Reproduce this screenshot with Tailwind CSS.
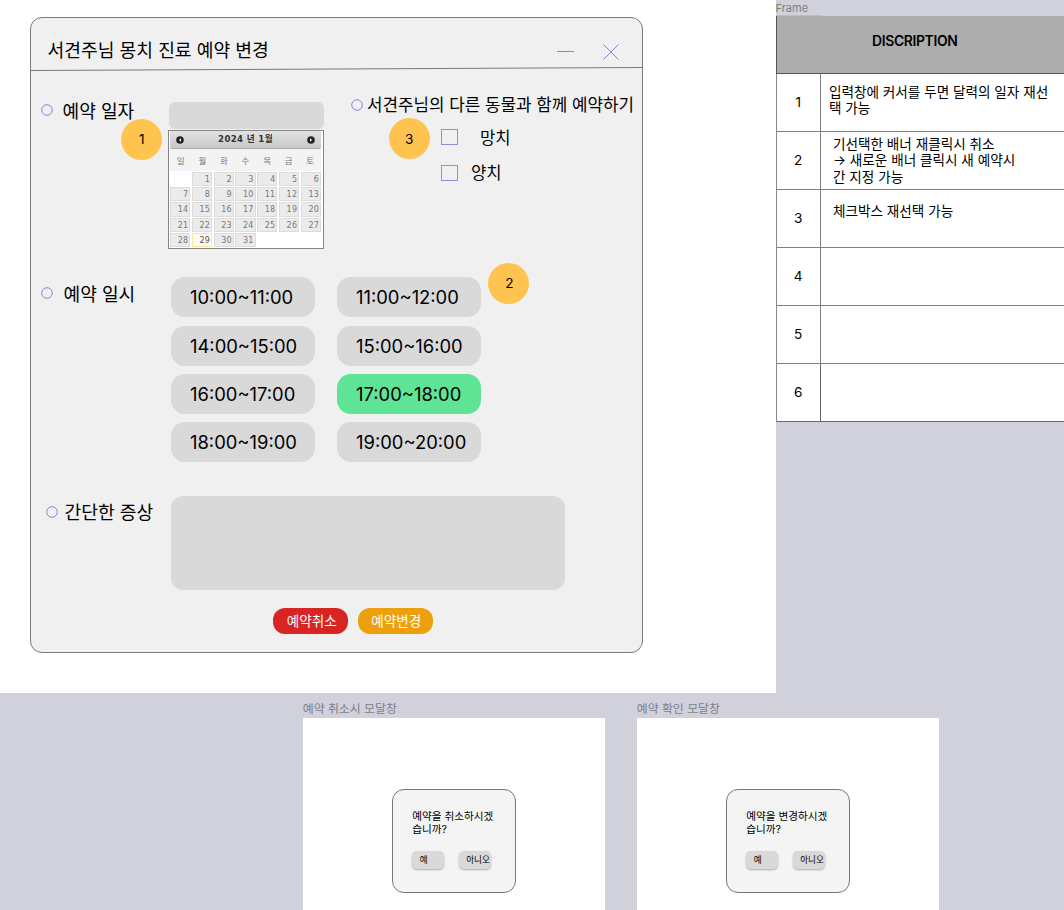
<!DOCTYPE html>
<html lang="ko">
<head>
  <meta charset="UTF-8" />
  <meta name="viewport" content="width=device-width, initial-scale=1" />
  <title>진료 예약 변경</title>
  <script src="https://cdn.jsdelivr.net/npm/@tailwindcss/browser@4"></script>
</head>
<body class="w-[1064px] h-[910px] overflow-hidden bg-[#d1d1dc] text-black font-['Inter','Noto_Sans_CJK_KR',sans-serif]">

<div class="flex h-[693px]">
  <!-- Main screen -->
  <main class="relative w-[775.5px] shrink-0 bg-white pl-[30px] pt-[17px]">
    <section class="w-[613px] h-[636px] rounded-[12px] border border-[#7a7a7a] bg-[#f0f0f0]">
      <header class="h-[50px] flex items-center pl-[16.5px] pr-[23px]">
        <h1 class="flex-1 text-[18.2px] leading-6 pt-[14px]">서견주님 몽치 진료 예약 변경</h1>
        <svg class="w-[18px] h-4 mt-[18px]" viewBox="0 0 18 16" stroke="#8585e0" fill="none"><path d="M0 7.5h17" /></svg>
        <svg class="w-4 h-4 ml-[28px] mt-[18px]" viewBox="0 0 16 16" stroke="#8585e0" fill="none"><path d="M.5 .5l15 15M15.5 .5l-15 15" /></svg>
      </header>
      <svg class="block w-[611px] h-[4px] overflow-visible" viewBox="0 0 611 4" stroke="#777" fill="none"><path d="M0 2.5L611 -0.5" /></svg>

      <!-- Date + companion animals -->
      <div class="flex h-[187px]">
        <div class="flex items-start w-[137px] pl-[9.5px] pt-[27px]">
          <svg class="w-3 h-3 mt-[5px]" viewBox="0 0 12 12" fill="none" stroke="#8585e0"><circle cx="6" cy="6" r="5.3" /></svg>
          <span class="ml-[10px] text-[18.1px] leading-6 whitespace-nowrap">예약 일자</span>
        </div>
        <div class="w-[156px] pt-[30px]">
          <div class="w-[155px] h-[27px] ml-px rounded-[6px] bg-[#d9d9d9]"></div>
          <div class="w-[156px] h-[119px] mt-px border border-[#858585] bg-white pl-px pr-[2px] text-[#777] font-['DejaVu_Sans','Noto_Sans_CJK_KR',sans-serif]">
            <div class="flex items-center justify-between h-[18px] px-[6px] rounded-b-[2px] border-b border-[#aaa] bg-linear-to-b from-[#e2e2e2] to-[#c8c8c8]">
              <svg class="w-2 h-2" viewBox="0 0 8 8"><circle cx="4" cy="4" r="3.8" fill="#222" /><path d="M5 2.2L3 4l2 1.8z" fill="#fff" /></svg>
              <span class="text-[8.6px] tracking-[0.35px] font-bold text-[#333] leading-none whitespace-nowrap">2024 년 1월</span>
              <svg class="w-2 h-2" viewBox="0 0 8 8"><circle cx="4" cy="4" r="3.8" fill="#222" /><path d="M3 2.2L5 4 3 5.8z" fill="#fff" /></svg>
            </div>
            <div class="grid grid-cols-7 h-[22px] bg-[#f3f3f3] text-[8.5px] leading-[24px] text-center">
              <span>일</span><span>월</span><span>화</span><span>수</span><span>목</span><span>금</span><span>토</span>
            </div>
            <div id="days" class="grid grid-cols-7 auto-rows-[14.2px] gap-x-[1.5px] gap-y-[1px] pt-[1px] text-[8px] leading-[13px] tracking-[0.2px] text-right"></div>
          </div>
        </div>
        <div class="pl-[27px] pt-[20px]">
          <div class="flex items-center h-[26px]">
            <svg class="w-3 h-3" viewBox="0 0 12 12" fill="none" stroke="#8585e0"><circle cx="6" cy="6" r="5.3" /></svg>
            <span class="ml-[4px] pt-[2px] text-[16.85px] whitespace-nowrap">서견주님의 다른 동물과 함께 예약하기</span>
          </div>
          <label class="flex items-center h-[36px] pl-[90px] mt-px">
            <span class="w-[17px] h-[16px] border border-[#8f8fe2]"></span>
            <span class="ml-[22px] pt-[2px] text-[16.6px]">망치</span>
          </label>
          <label class="flex items-center h-[36px] pl-[90px]">
            <span class="w-[17px] h-[16px] border border-[#8f8fe2]"></span>
            <span class="ml-[13px] text-[16.6px]">양치</span>
          </label>
        </div>
      </div>

      <!-- Time slots -->
      <div class="flex h-[219px] pt-[18px]">
        <div class="flex items-start w-[140px] pl-[10px] pt-[5px]">
          <svg class="w-3 h-3 mt-[5px]" viewBox="0 0 12 12" fill="none" stroke="#8585e0"><circle cx="6" cy="6" r="5.3" /></svg>
          <span class="ml-[10.5px] text-[18.1px] leading-6 whitespace-nowrap">예약 일시</span>
        </div>
        <div class="grid grid-cols-[144px_144px] auto-rows-[40px] gap-x-[22px] gap-y-[8.2px] pt-[0.4px] text-[18.4px] leading-[41px]">
          <div class="pl-[19px] rounded-[14px] bg-[#d9d9d9]">10:00~11:00</div>
          <div class="pl-[19px] rounded-[14px] bg-[#d9d9d9]">11:00~12:00</div>
          <div class="pl-[19px] rounded-[14px] bg-[#d9d9d9]">14:00~15:00</div>
          <div class="pl-[19px] rounded-[14px] bg-[#d9d9d9]">15:00~16:00</div>
          <div class="pl-[19px] rounded-[14px] bg-[#d9d9d9]">16:00~17:00</div>
          <div class="pl-[19px] rounded-[14px] bg-[#5fe395]">17:00~18:00</div>
          <div class="pl-[19px] rounded-[14px] bg-[#d9d9d9]">18:00~19:00</div>
          <div class="pl-[19px] rounded-[14px] bg-[#d9d9d9]">19:00~20:00</div>
        </div>
      </div>

      <!-- Symptoms -->
      <div class="flex pt-[18px]">
        <div class="flex items-start w-[140px] pl-[15px] pt-[4px]">
          <svg class="w-3 h-3 mt-[6px]" viewBox="0 0 12 12" fill="none" stroke="#8585e0"><circle cx="6" cy="6" r="5.3" /></svg>
          <span class="ml-[6.5px] text-[18.2px] leading-6 whitespace-nowrap">간단한 증상</span>
        </div>
        <div class="w-[394px] h-[94px] rounded-[12px] bg-[#d9d9d9]"></div>
      </div>

      <div class="flex gap-[9.5px] pl-[242.3px] pt-[18px] text-[13.6px] leading-[25px] text-white text-center">
        <button class="w-[75px] h-[26px] pl-[2px] rounded-[12px] bg-[#d92424]">예약취소</button>
        <button class="w-[75px] h-[26px] pl-[2px] rounded-[12px] bg-[#eca00c]">예약변경</button>
      </div>
    </section>

    <!-- Annotation pins -->
    <span class="absolute left-[121.3px] top-[119.4px] w-[41px] h-[41px] rounded-full bg-[#ffc34f] text-[13.6px] leading-[41px] text-center">1</span>
    <span class="absolute left-[488px] top-[262.5px] w-[41px] h-[41px] rounded-full bg-[#ffc34f] text-[13.6px] leading-[41px] text-center pl-[2px]">2</span>
    <span class="absolute left-[388.7px] top-[118px] w-[41px] h-[41px] rounded-full bg-[#ffc34f] text-[13.6px] leading-[42px] text-center">3</span>
  </main>

  <!-- Description table -->
  <aside class="flex-1 min-w-0">
    <div class="h-[16px] text-[11px] leading-[16px] text-[#7d7d86]"><span class="inline-block w-[46px] h-[16px] border-b border-[#bdbdc8]">Frame</span></div>
    <div class="h-[58px] pr-[11px] border-l border-b border-[#555] bg-[#adadad] text-[13.9px] leading-[51px] font-semibold text-center tracking-[-0.35px]">DISCRIPTION</div>
    <div class="grid grid-cols-[44.5px_1fr] auto-rows-[58px] border-l border-[#888] bg-white text-[13.6px] leading-[16.4px]">
      <div class="border-r border-b border-[#808080] leading-[57px] text-center">1</div>
      <div class="border-b border-[#808080] pl-[8px] pt-[9.5px] whitespace-nowrap">입력창에 커서를 두면 달력의 일자 재선<br>택 가능</div>
      <div class="border-r border-b border-[#808080] leading-[57px] text-center">2</div>
      <div class="border-b border-[#808080] pl-[12px] pt-[4px] whitespace-nowrap">기선택한 배너 재클릭시 취소<br>→ 새로운 배너 클릭시 새 예약시<br>간 지정 가능</div>
      <div class="border-r border-b border-[#808080] leading-[57px] text-center">3</div>
      <div class="border-b border-[#808080] pl-[12px] pt-[13px] whitespace-nowrap">체크박스 재선택 가능</div>
      <div class="border-r border-b border-[#808080] leading-[57px] text-center">4</div>
      <div class="border-b border-[#808080]"></div>
      <div class="border-r border-b border-[#808080] leading-[57px] text-center">5</div>
      <div class="border-b border-[#808080]"></div>
      <div class="border-r border-b border-[#666] leading-[57px] text-center">6</div>
      <div class="border-b border-[#666]"></div>
    </div>
  </aside>
</div>

<!-- Modal frames -->
<div class="flex gap-[32px] pl-[302.7px]">
  <section class="w-[302px]">
    <h2 class="h-[24.5px] pt-[6px] text-[11.9px] leading-[20px] text-[#7d7d86]">예약 취소시 모달창</h2>
    <div class="h-[193px] bg-white pl-[89px] pt-[71.5px]">
      <div class="w-[124px] h-[104px] rounded-[12px] border border-[#777] bg-[#f4f4f4] pl-[19.5px] pt-[21px]">
        <p class="text-[10.6px] leading-[12.7px] whitespace-nowrap">예약을 취소하시겠<br>습니까?</p>
        <div class="flex gap-[15px] mt-[15px] text-[8.6px] leading-[19px]">
          <button class="w-[32px] h-[18px] pl-[7.5px] rounded-[5px] bg-[#d9d9d9] text-left shadow-[0_1px_2px_rgba(0,0,0,0.3)]">예</button>
          <button class="w-[32px] h-[18px] pl-[7px] rounded-[5px] bg-[#d9d9d9] text-left whitespace-nowrap shadow-[0_1px_2px_rgba(0,0,0,0.3)]">아니오</button>
        </div>
      </div>
    </div>
  </section>
  <section class="w-[302px]">
    <h2 class="h-[24.5px] pt-[6px] text-[11.9px] leading-[20px] text-[#7d7d86]">예약 확인 모달창</h2>
    <div class="h-[193px] bg-white pl-[89px] pt-[71.5px]">
      <div class="w-[124px] h-[104px] rounded-[12px] border border-[#777] bg-[#f4f4f4] pl-[19.5px] pt-[21px]">
        <p class="text-[10.6px] leading-[12.7px] whitespace-nowrap">예약을 변경하시겠<br>습니까?</p>
        <div class="flex gap-[15px] mt-[15px] text-[8.6px] leading-[19px]">
          <button class="w-[32px] h-[18px] pl-[7.5px] rounded-[5px] bg-[#d9d9d9] text-left shadow-[0_1px_2px_rgba(0,0,0,0.3)]">예</button>
          <button class="w-[32px] h-[18px] pl-[7px] rounded-[5px] bg-[#d9d9d9] text-left whitespace-nowrap shadow-[0_1px_2px_rgba(0,0,0,0.3)]">아니오</button>
        </div>
      </div>
    </div>
  </section>
</div>

<script>
  // January 2024 starts on Monday
  const days = document.getElementById('days');
  days.appendChild(document.createElement('span'));
  for (let d = 1; d <= 31; d++) {
    const cell = document.createElement('span');
    cell.textContent = d;
    cell.className = d === 29
      ? 'border border-[#f7e9a0] bg-[#fffbee] text-[#555] pr-[1px]'
      : 'border border-[#dcdcdc] bg-[#ebebeb] pr-[1px]';
    days.appendChild(cell);
  }
</script>
</body>
</html>
